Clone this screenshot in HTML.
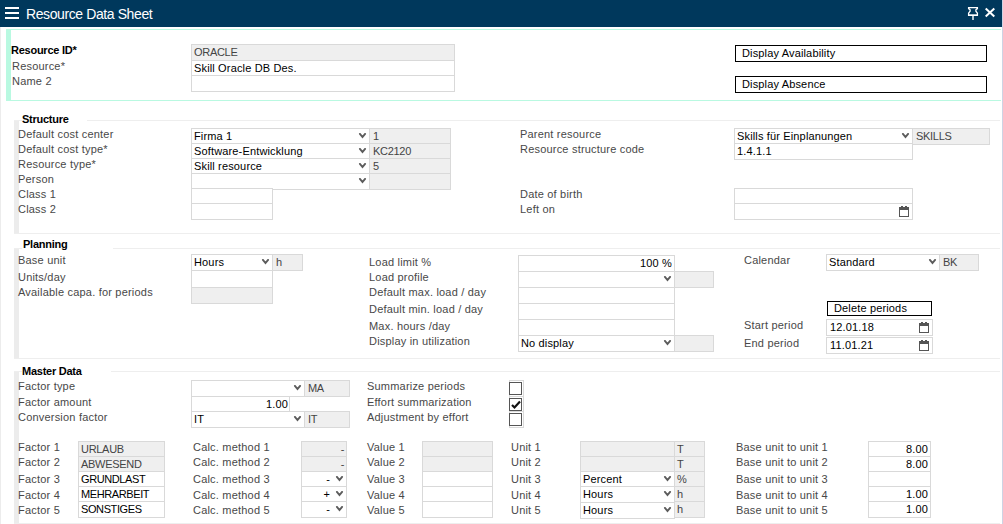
<!DOCTYPE html>
<html><head><meta charset="utf-8"><style>
html,body{margin:0;padding:0;background:#fff;width:1003px;height:524px;overflow:hidden;position:relative}
body{font-family:"Liberation Sans",sans-serif}
.r{position:absolute}
.b{position:absolute;box-sizing:border-box;border:1px solid}
.t{position:absolute;font-size:11px;line-height:12px;white-space:nowrap}
.l{color:#484848;letter-spacing:0.2px}
.v{color:#000;letter-spacing:0.15px}
.g{color:#444;letter-spacing:-0.3px}
.bl{font-weight:bold;color:#000;letter-spacing:-0.25px}
.cap{letter-spacing:-0.4px}
.h{color:#fff;font-size:14px;line-height:14px;letter-spacing:-0.4px}
</style></head><body>
<div class="r" style="left:0px;top:0px;width:1002px;height:27px;background:#00385c"></div>
<svg class="r" style="left:0px;top:0px" width="24" height="24" viewBox="0 0 24 24"><rect x="5" y="7" width="14" height="2" fill="#fff"/><rect x="5" y="12" width="14" height="2" fill="#fff"/><rect x="5" y="17" width="14" height="2" fill="#fff"/></svg>
<div class="t h" style="left:26px;top:7px;">Resource Data Sheet</div>
<svg class="r" style="left:963px;top:3px" width="20" height="20" viewBox="0 0 20 20"><path d="M5.6 4.6 H14.4 V5.6 L12.9 6.8 V8.2 L14.4 10.2 V12.4 H5.6 V10.2 L7.1 8.2 V6.8 L5.6 5.6 Z" fill="none" stroke="#fff" stroke-width="1.3" stroke-linejoin="miter"/><path d="M5.5 12.2 H14.5" stroke="#fff" stroke-width="1.6"/><path d="M10 13 V17" stroke="#fff" stroke-width="1.4"/></svg>
<svg class="r" style="left:984px;top:7px" width="12" height="11" viewBox="0 0 12 11"><path d="M1.7 1.5 L10.3 9.5 M10.3 1.5 L1.7 9.5" fill="none" stroke="#fff" stroke-width="2"/></svg>
<div class="r" style="left:0px;top:27px;width:1px;height:497px;background:#ececec"></div>
<div class="r" style="left:1002px;top:0px;width:1px;height:524px;background:#ced3e4"></div>
<div class="r" style="left:6px;top:29px;width:995px;height:1px;background:#b9f9e1"></div>
<div class="r" style="left:6px;top:100px;width:995px;height:1px;background:#b9f9e1"></div>
<div class="r" style="left:6px;top:29px;width:5px;height:72px;background:#b9f9e1"></div>
<div class="t bl" style="left:11px;top:44px;">Resource ID*</div>
<div class="t l" style="left:12px;top:60px;">Resource*</div>
<div class="t l" style="left:12px;top:75px;">Name 2</div>
<div class="b" style="left:191px;top:44px;width:264px;height:17px;background:#efefef;border-color:#d9d9d9;"></div>
<div class="b" style="left:191px;top:60px;width:264px;height:16px;background:#fff;border-color:#d9d9d9;"></div>
<div class="b" style="left:191px;top:75px;width:264px;height:17px;background:#fff;border-color:#d9d9d9;"></div>
<div class="t g" style="left:194px;top:46px;">ORACLE</div>
<div class="t v" style="left:194px;top:62px;">Skill Oracle DB Des.</div>
<div class="b" style="left:735px;top:45px;width:252px;height:17px;background:#fff;border-color:#000;"></div>
<div class="t v" style="left:742px;top:47px;">Display Availability</div>
<div class="b" style="left:735px;top:76px;width:252px;height:17px;background:#fff;border-color:#000;"></div>
<div class="t v" style="left:742px;top:78px;">Display Absence</div>
<div class="r" style="left:14px;top:120px;width:5px;height:114px;background:#ececec"></div>
<div class="r" style="left:14px;top:120px;width:8px;height:1px;background:#eeeeee"></div>
<div class="r" style="left:87px;top:120px;width:913px;height:1px;background:#eeeeee"></div>
<div class="r" style="left:14px;top:233px;width:986px;height:1px;background:#eeeeee"></div>
<div class="t bl" style="left:22px;top:113px;">Structure</div>
<div class="r" style="left:14px;top:248px;width:5px;height:111px;background:#ececec"></div>
<div class="r" style="left:14px;top:248px;width:8px;height:1px;background:#eeeeee"></div>
<div class="r" style="left:113px;top:248px;width:887px;height:1px;background:#eeeeee"></div>
<div class="r" style="left:14px;top:358px;width:986px;height:1px;background:#eeeeee"></div>
<div class="t bl" style="left:23px;top:238px;">Planning</div>
<div class="r" style="left:14px;top:371px;width:5px;height:153px;background:#ececec"></div>
<div class="r" style="left:14px;top:371px;width:8px;height:1px;background:#eeeeee"></div>
<div class="r" style="left:111px;top:371px;width:889px;height:1px;background:#eeeeee"></div>
<div class="r" style="left:14px;top:523px;width:986px;height:1px;background:#eeeeee"></div>
<div class="t bl" style="left:22px;top:365px;">Master Data</div>
<div class="t l" style="left:18px;top:128px;">Default cost center</div>
<div class="t l" style="left:18px;top:143px;">Default cost type*</div>
<div class="t l" style="left:18px;top:158px;">Resource type*</div>
<div class="t l" style="left:18px;top:173px;">Person</div>
<div class="t l" style="left:18px;top:188px;">Class 1</div>
<div class="t l" style="left:18px;top:203px;">Class 2</div>
<div class="b" style="left:369px;top:128px;width:82px;height:16px;background:#efefef;border-color:#d9d9d9;"></div>
<div class="b" style="left:369px;top:143px;width:82px;height:16px;background:#efefef;border-color:#d9d9d9;"></div>
<div class="b" style="left:369px;top:158px;width:82px;height:16px;background:#efefef;border-color:#d9d9d9;"></div>
<div class="b" style="left:369px;top:173px;width:82px;height:17px;background:#efefef;border-color:#d9d9d9;"></div>
<div class="b" style="left:191px;top:128px;width:179px;height:16px;background:#fff;border-color:#d9d9d9;"></div>
<div class="b" style="left:191px;top:143px;width:179px;height:16px;background:#fff;border-color:#d9d9d9;"></div>
<div class="b" style="left:191px;top:158px;width:179px;height:16px;background:#fff;border-color:#d9d9d9;"></div>
<div class="b" style="left:191px;top:173px;width:179px;height:17px;background:#fff;border-color:#d9d9d9;"></div>
<div class="t v" style="left:194px;top:130px;">Firma 1</div>
<svg class="r" style="left:358px;top:133px" width="9" height="7" viewBox="0 0 9 7"><path d="M1.9 0.9 L4.5 4.1 L7.1 0.9" fill="none" stroke="#5c5c5c" stroke-width="1.9" stroke-linecap="round"/></svg>
<div class="t v" style="left:194px;top:145px;">Software-Entwicklung</div>
<svg class="r" style="left:358px;top:148px" width="9" height="7" viewBox="0 0 9 7"><path d="M1.9 0.9 L4.5 4.1 L7.1 0.9" fill="none" stroke="#5c5c5c" stroke-width="1.9" stroke-linecap="round"/></svg>
<div class="t v" style="left:194px;top:160px;">Skill resource</div>
<svg class="r" style="left:358px;top:163px" width="9" height="7" viewBox="0 0 9 7"><path d="M1.9 0.9 L4.5 4.1 L7.1 0.9" fill="none" stroke="#5c5c5c" stroke-width="1.9" stroke-linecap="round"/></svg>
<svg class="r" style="left:358px;top:178px" width="9" height="7" viewBox="0 0 9 7"><path d="M1.9 0.9 L4.5 4.1 L7.1 0.9" fill="none" stroke="#5c5c5c" stroke-width="1.9" stroke-linecap="round"/></svg>
<div class="t g" style="left:373px;top:130px;">1</div>
<div class="t g" style="left:373px;top:145px;">KC2120</div>
<div class="t g" style="left:373px;top:160px;">5</div>
<div class="b" style="left:191px;top:188px;width:82px;height:16px;background:#fff;border-color:#d9d9d9;"></div>
<div class="b" style="left:191px;top:203px;width:82px;height:17px;background:#fff;border-color:#d9d9d9;"></div>
<div class="t l" style="left:520px;top:128px;">Parent resource</div>
<div class="t l" style="left:520px;top:143px;">Resource structure code</div>
<div class="t l" style="left:520px;top:188px;">Date of birth</div>
<div class="t l" style="left:520px;top:203px;">Left on</div>
<div class="b" style="left:912px;top:128px;width:78px;height:17px;background:#efefef;border-color:#d9d9d9;"></div>
<div class="b" style="left:734px;top:128px;width:179px;height:16px;background:#fff;border-color:#d9d9d9;"></div>
<div class="b" style="left:734px;top:143px;width:179px;height:17px;background:#fff;border-color:#d9d9d9;"></div>
<div class="t v" style="left:737px;top:130px;">Skills für Einplanungen</div>
<svg class="r" style="left:901px;top:133px" width="9" height="7" viewBox="0 0 9 7"><path d="M1.9 0.9 L4.5 4.1 L7.1 0.9" fill="none" stroke="#5c5c5c" stroke-width="1.9" stroke-linecap="round"/></svg>
<div class="t g" style="left:916px;top:130px;">SKILLS</div>
<div class="t v" style="left:737px;top:145px;">1.4.1.1</div>
<div class="b" style="left:734px;top:188px;width:179px;height:16px;background:#fff;border-color:#d9d9d9;"></div>
<div class="b" style="left:734px;top:203px;width:179px;height:17px;background:#fff;border-color:#d9d9d9;"></div>
<svg class="r" style="left:899px;top:206px" width="10" height="11" viewBox="0 0 10 11"><rect x="0.5" y="1.5" width="9" height="9" fill="none" stroke="#555" stroke-width="1"/><rect x="0" y="1" width="10" height="3" fill="#555"/><rect x="2" y="0" width="2" height="2" fill="#555"/><rect x="6" y="0" width="2" height="2" fill="#555"/></svg>
<div class="t l" style="left:18px;top:254px;">Base unit</div>
<div class="t l" style="left:18px;top:271px;">Units/day</div>
<div class="t l" style="left:18px;top:286px;">Available capa. for periods</div>
<div class="b" style="left:272px;top:254px;width:31px;height:17px;background:#efefef;border-color:#d9d9d9;"></div>
<div class="b" style="left:191px;top:254px;width:82px;height:17px;background:#fff;border-color:#d9d9d9;"></div>
<div class="t v" style="left:194px;top:256px;">Hours</div>
<svg class="r" style="left:261px;top:259px" width="9" height="7" viewBox="0 0 9 7"><path d="M1.9 0.9 L4.5 4.1 L7.1 0.9" fill="none" stroke="#5c5c5c" stroke-width="1.9" stroke-linecap="round"/></svg>
<div class="t g" style="left:276px;top:256px;">h</div>
<div class="b" style="left:191px;top:270px;width:82px;height:18px;background:#fff;border-color:#d9d9d9;"></div>
<div class="b" style="left:191px;top:287px;width:82px;height:17px;background:#efefef;border-color:#d9d9d9;"></div>
<div class="t l" style="left:369px;top:256px;">Load limit %</div>
<div class="t l" style="left:369px;top:271px;">Load profile</div>
<div class="t l" style="left:369px;top:286px;">Default max. load / day</div>
<div class="t l" style="left:369px;top:303px;">Default min. load / day</div>
<div class="t l" style="left:369px;top:320px;">Max. hours /day</div>
<div class="t l" style="left:369px;top:335px;">Display in utilization</div>
<div class="b" style="left:518px;top:255px;width:157px;height:17px;background:#fff;border-color:#d9d9d9;"></div>
<div class="b" style="left:518px;top:271px;width:157px;height:17px;background:#fff;border-color:#d9d9d9;"></div>
<div class="b" style="left:518px;top:287px;width:157px;height:17px;background:#fff;border-color:#d9d9d9;"></div>
<div class="b" style="left:518px;top:303px;width:157px;height:17px;background:#fff;border-color:#d9d9d9;"></div>
<div class="b" style="left:518px;top:319px;width:157px;height:17px;background:#fff;border-color:#d9d9d9;"></div>
<div class="b" style="left:518px;top:335px;width:157px;height:17px;background:#fff;border-color:#d9d9d9;"></div>
<div class="b" style="left:674px;top:271px;width:40px;height:17px;background:#efefef;border-color:#d9d9d9;"></div>
<div class="b" style="left:674px;top:335px;width:40px;height:17px;background:#efefef;border-color:#d9d9d9;"></div>
<div class="t v" style="right:331px;top:257px;text-align:right;">100 %</div>
<svg class="r" style="left:663px;top:276px" width="9" height="7" viewBox="0 0 9 7"><path d="M1.9 0.9 L4.5 4.1 L7.1 0.9" fill="none" stroke="#5c5c5c" stroke-width="1.9" stroke-linecap="round"/></svg>
<div class="t v" style="left:521px;top:337px;">No display</div>
<svg class="r" style="left:663px;top:340px" width="9" height="7" viewBox="0 0 9 7"><path d="M1.9 0.9 L4.5 4.1 L7.1 0.9" fill="none" stroke="#5c5c5c" stroke-width="1.9" stroke-linecap="round"/></svg>
<div class="t l" style="left:744px;top:254px;">Calendar</div>
<div class="b" style="left:939px;top:254px;width:40px;height:17px;background:#efefef;border-color:#d9d9d9;"></div>
<div class="b" style="left:826px;top:254px;width:114px;height:17px;background:#fff;border-color:#d9d9d9;"></div>
<div class="t v" style="left:829px;top:256px;">Standard</div>
<svg class="r" style="left:928px;top:259px" width="9" height="7" viewBox="0 0 9 7"><path d="M1.9 0.9 L4.5 4.1 L7.1 0.9" fill="none" stroke="#5c5c5c" stroke-width="1.9" stroke-linecap="round"/></svg>
<div class="t g" style="left:943px;top:256px;">BK</div>
<div class="b" style="left:827px;top:301px;width:105px;height:15px;background:#fff;border-color:#000;"></div>
<div class="t v" style="left:834px;top:302px;">Delete periods</div>
<div class="t l" style="left:744px;top:319px;">Start period</div>
<div class="t l" style="left:744px;top:337px;">End period</div>
<div class="b" style="left:826px;top:319px;width:107px;height:17px;background:#fff;border-color:#d9d9d9;"></div>
<div class="b" style="left:826px;top:337px;width:107px;height:17px;background:#fff;border-color:#d9d9d9;"></div>
<div class="t v" style="left:830px;top:321px;">12.01.18</div>
<div class="t v" style="left:830px;top:339px;">11.01.21</div>
<svg class="r" style="left:919px;top:322px" width="10" height="11" viewBox="0 0 10 11"><rect x="0.5" y="1.5" width="9" height="9" fill="none" stroke="#555" stroke-width="1"/><rect x="0" y="1" width="10" height="3" fill="#555"/><rect x="2" y="0" width="2" height="2" fill="#555"/><rect x="6" y="0" width="2" height="2" fill="#555"/></svg>
<svg class="r" style="left:919px;top:340px" width="10" height="11" viewBox="0 0 10 11"><rect x="0.5" y="1.5" width="9" height="9" fill="none" stroke="#555" stroke-width="1"/><rect x="0" y="1" width="10" height="3" fill="#555"/><rect x="2" y="0" width="2" height="2" fill="#555"/><rect x="6" y="0" width="2" height="2" fill="#555"/></svg>
<div class="t l" style="left:18px;top:380px;">Factor type</div>
<div class="t l" style="left:18px;top:396px;">Factor amount</div>
<div class="t l" style="left:18px;top:411px;">Conversion factor</div>
<div class="b" style="left:304px;top:380px;width:46px;height:17px;background:#efefef;border-color:#d9d9d9;"></div>
<div class="b" style="left:304px;top:411px;width:46px;height:17px;background:#efefef;border-color:#d9d9d9;"></div>
<div class="b" style="left:191px;top:380px;width:114px;height:17px;background:#fff;border-color:#d9d9d9;"></div>
<div class="b" style="left:191px;top:396px;width:99px;height:16px;background:#fff;border-color:#d9d9d9;"></div>
<div class="b" style="left:191px;top:411px;width:114px;height:17px;background:#fff;border-color:#d9d9d9;"></div>
<svg class="r" style="left:293px;top:385px" width="9" height="7" viewBox="0 0 9 7"><path d="M1.9 0.9 L4.5 4.1 L7.1 0.9" fill="none" stroke="#5c5c5c" stroke-width="1.9" stroke-linecap="round"/></svg>
<svg class="r" style="left:293px;top:416px" width="9" height="7" viewBox="0 0 9 7"><path d="M1.9 0.9 L4.5 4.1 L7.1 0.9" fill="none" stroke="#5c5c5c" stroke-width="1.9" stroke-linecap="round"/></svg>
<div class="t g" style="left:308px;top:382px;">MA</div>
<div class="t g" style="left:308px;top:413px;">IT</div>
<div class="t v" style="right:715px;top:398px;text-align:right;">1.00</div>
<div class="t v" style="left:194px;top:413px;">IT</div>
<div class="t l" style="left:367px;top:380px;">Summarize periods</div>
<div class="t l" style="left:367px;top:396px;">Effort summarization</div>
<div class="t l" style="left:367px;top:411px;">Adjustment by effort</div>
<div class="b" style="left:509px;top:380px;width:15px;height:17px;background:#fff;border-color:#d9d9d9;"></div>
<div class="b" style="left:509px;top:396px;width:15px;height:16px;background:#fff;border-color:#d9d9d9;"></div>
<div class="b" style="left:509px;top:411px;width:15px;height:17px;background:#fff;border-color:#d9d9d9;"></div>
<div class="b" style="left:509px;top:382px;width:13px;height:13px;background:#fff;border-color:#555;"></div>
<div class="b" style="left:509px;top:398px;width:13px;height:13px;background:#fff;border-color:#555;"></div>
<div class="b" style="left:509px;top:413px;width:13px;height:13px;background:#fff;border-color:#555;"></div>
<svg class="r" style="left:510px;top:399px" width="12" height="12" viewBox="0 0 12 12"><path d="M2 6 L4.5 8.5 L10 2.5" fill="none" stroke="#111" stroke-width="2.2"/></svg>
<div class="t l" style="left:18px;top:441px;">Factor 1</div>
<div class="t l" style="left:193px;top:441px;">Calc. method 1</div>
<div class="t l" style="left:367px;top:441px;">Value 1</div>
<div class="t l" style="left:511px;top:441px;">Unit 1</div>
<div class="t l" style="left:736px;top:441px;">Base unit to unit 1</div>
<div class="t l" style="left:18px;top:456px;">Factor 2</div>
<div class="t l" style="left:193px;top:456px;">Calc. method 2</div>
<div class="t l" style="left:367px;top:456px;">Value 2</div>
<div class="t l" style="left:511px;top:456px;">Unit 2</div>
<div class="t l" style="left:736px;top:456px;">Base unit to unit 2</div>
<div class="t l" style="left:18px;top:473px;">Factor 3</div>
<div class="t l" style="left:193px;top:473px;">Calc. method 3</div>
<div class="t l" style="left:367px;top:473px;">Value 3</div>
<div class="t l" style="left:511px;top:473px;">Unit 3</div>
<div class="t l" style="left:736px;top:473px;">Base unit to unit 3</div>
<div class="t l" style="left:18px;top:489px;">Factor 4</div>
<div class="t l" style="left:193px;top:489px;">Calc. method 4</div>
<div class="t l" style="left:367px;top:489px;">Value 4</div>
<div class="t l" style="left:511px;top:489px;">Unit 4</div>
<div class="t l" style="left:736px;top:489px;">Base unit to unit 4</div>
<div class="t l" style="left:18px;top:504px;">Factor 5</div>
<div class="t l" style="left:193px;top:504px;">Calc. method 5</div>
<div class="t l" style="left:367px;top:504px;">Value 5</div>
<div class="t l" style="left:511px;top:504px;">Unit 5</div>
<div class="t l" style="left:736px;top:504px;">Base unit to unit 5</div>
<div class="b" style="left:78px;top:441px;width:87px;height:16px;background:#efefef;border-color:#d9d9d9;"></div>
<div class="b" style="left:78px;top:456px;width:87px;height:16px;background:#efefef;border-color:#d9d9d9;"></div>
<div class="b" style="left:78px;top:471px;width:87px;height:16px;background:#fff;border-color:#d9d9d9;"></div>
<div class="b" style="left:78px;top:486px;width:87px;height:16px;background:#fff;border-color:#d9d9d9;"></div>
<div class="b" style="left:78px;top:501px;width:87px;height:17px;background:#fff;border-color:#d9d9d9;"></div>
<div class="t g" style="left:81px;top:443px;">URLAUB</div>
<div class="t g" style="left:81px;top:458px;">ABWESEND</div>
<div class="t v cap" style="left:81px;top:473px;">GRUNDLAST</div>
<div class="t v cap" style="left:81px;top:488px;">MEHRARBEIT</div>
<div class="t v cap" style="left:81px;top:503px;">SONSTIGES</div>
<div class="b" style="left:301px;top:441px;width:46px;height:16px;background:#efefef;border-color:#d9d9d9;"></div>
<div class="b" style="left:301px;top:456px;width:46px;height:16px;background:#efefef;border-color:#d9d9d9;"></div>
<div class="b" style="left:301px;top:471px;width:46px;height:16px;background:#fff;border-color:#d9d9d9;"></div>
<div class="b" style="left:301px;top:486px;width:46px;height:16px;background:#fff;border-color:#d9d9d9;"></div>
<div class="b" style="left:301px;top:501px;width:46px;height:17px;background:#fff;border-color:#d9d9d9;"></div>
<div class="t g" style="right:659px;top:443px;text-align:right;">-</div>
<div class="t g" style="right:659px;top:458px;text-align:right;">-</div>
<div class="t v" style="right:673px;top:473px;text-align:right;">-</div>
<svg class="r" style="left:335px;top:476px" width="9" height="7" viewBox="0 0 9 7"><path d="M1.9 0.9 L4.5 4.1 L7.1 0.9" fill="none" stroke="#5c5c5c" stroke-width="1.9" stroke-linecap="round"/></svg>
<div class="t v" style="right:673px;top:488px;text-align:right;">+</div>
<svg class="r" style="left:335px;top:491px" width="9" height="7" viewBox="0 0 9 7"><path d="M1.9 0.9 L4.5 4.1 L7.1 0.9" fill="none" stroke="#5c5c5c" stroke-width="1.9" stroke-linecap="round"/></svg>
<div class="t v" style="right:673px;top:503px;text-align:right;">-</div>
<svg class="r" style="left:335px;top:506px" width="9" height="7" viewBox="0 0 9 7"><path d="M1.9 0.9 L4.5 4.1 L7.1 0.9" fill="none" stroke="#5c5c5c" stroke-width="1.9" stroke-linecap="round"/></svg>
<div class="b" style="left:422px;top:441px;width:71px;height:16px;background:#efefef;border-color:#d9d9d9;"></div>
<div class="b" style="left:422px;top:456px;width:71px;height:16px;background:#efefef;border-color:#d9d9d9;"></div>
<div class="b" style="left:422px;top:471px;width:71px;height:16px;background:#fff;border-color:#d9d9d9;"></div>
<div class="b" style="left:422px;top:486px;width:71px;height:16px;background:#fff;border-color:#d9d9d9;"></div>
<div class="b" style="left:422px;top:501px;width:71px;height:17px;background:#fff;border-color:#d9d9d9;"></div>
<div class="b" style="left:674px;top:441px;width:31px;height:16px;background:#efefef;border-color:#d9d9d9;"></div>
<div class="b" style="left:674px;top:456px;width:31px;height:16px;background:#efefef;border-color:#d9d9d9;"></div>
<div class="b" style="left:674px;top:471px;width:31px;height:16px;background:#efefef;border-color:#d9d9d9;"></div>
<div class="b" style="left:674px;top:486px;width:31px;height:16px;background:#efefef;border-color:#d9d9d9;"></div>
<div class="b" style="left:674px;top:501px;width:31px;height:17px;background:#efefef;border-color:#d9d9d9;"></div>
<div class="b" style="left:580px;top:441px;width:95px;height:16px;background:#efefef;border-color:#d9d9d9;"></div>
<div class="b" style="left:580px;top:456px;width:95px;height:16px;background:#efefef;border-color:#d9d9d9;"></div>
<div class="b" style="left:580px;top:471px;width:95px;height:16px;background:#fff;border-color:#d9d9d9;"></div>
<div class="b" style="left:580px;top:486px;width:95px;height:17px;background:#fff;border-color:#d9d9d9;"></div>
<div class="b" style="left:580px;top:502px;width:95px;height:17px;background:#fff;border-color:#d9d9d9;"></div>
<div class="t g" style="left:677px;top:443px;">T</div>
<div class="t g" style="left:677px;top:458px;">T</div>
<div class="t g" style="left:677px;top:473px;">%</div>
<div class="t g" style="left:677px;top:488px;">h</div>
<div class="t g" style="left:677px;top:503px;">h</div>
<div class="t v" style="left:583px;top:473px;">Percent</div>
<svg class="r" style="left:663px;top:476px" width="9" height="7" viewBox="0 0 9 7"><path d="M1.9 0.9 L4.5 4.1 L7.1 0.9" fill="none" stroke="#5c5c5c" stroke-width="1.9" stroke-linecap="round"/></svg>
<div class="t v" style="left:583px;top:488px;">Hours</div>
<svg class="r" style="left:663px;top:491px" width="9" height="7" viewBox="0 0 9 7"><path d="M1.9 0.9 L4.5 4.1 L7.1 0.9" fill="none" stroke="#5c5c5c" stroke-width="1.9" stroke-linecap="round"/></svg>
<div class="t v" style="left:583px;top:504px;">Hours</div>
<svg class="r" style="left:663px;top:507px" width="9" height="7" viewBox="0 0 9 7"><path d="M1.9 0.9 L4.5 4.1 L7.1 0.9" fill="none" stroke="#5c5c5c" stroke-width="1.9" stroke-linecap="round"/></svg>
<div class="b" style="left:868px;top:441px;width:63px;height:16px;background:#fff;border-color:#d9d9d9;"></div>
<div class="b" style="left:868px;top:456px;width:63px;height:16px;background:#fff;border-color:#d9d9d9;"></div>
<div class="b" style="left:868px;top:471px;width:63px;height:16px;background:#fff;border-color:#d9d9d9;"></div>
<div class="b" style="left:868px;top:486px;width:63px;height:16px;background:#fff;border-color:#d9d9d9;"></div>
<div class="b" style="left:868px;top:501px;width:63px;height:17px;background:#fff;border-color:#d9d9d9;"></div>
<div class="t v" style="right:75px;top:443px;text-align:right;">8.00</div>
<div class="t v" style="right:75px;top:458px;text-align:right;">8.00</div>
<div class="t v" style="right:75px;top:488px;text-align:right;">1.00</div>
<div class="t v" style="right:75px;top:503px;text-align:right;">1.00</div>
</body></html>
